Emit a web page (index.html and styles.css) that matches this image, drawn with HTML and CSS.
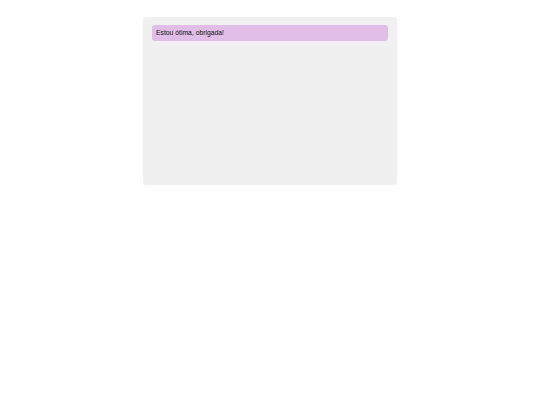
FILE: index.html
```html
<!DOCTYPE html>
<html>
<head>
<meta charset="utf-8">
<link rel="stylesheet" href="styles.css">
</head>
<body>
<div class="chat">
  <div class="bubble">Estou ótima, obrigada!</div>
</div>
</body>
</html>
```
FILE: styles.css
```css
html, body { margin: 0; padding: 0; background: #fff; }
body { padding-top: 17px; font-family: "Liberation Sans", Arial, sans-serif; }
.chat {
  width: 254px;
  height: 168px;
  box-sizing: border-box;
  margin: 0 auto;
  background: #f0f0f0;
  border-radius: 3px;
  padding: 8px 9px;
}
.bubble {
  background: #e1bee7;
  border-radius: 3px;
  height: 16px;
  line-height: 16px;
  padding: 0 4px;
  font-size: 6.8px;
  color: #111;
}
```
